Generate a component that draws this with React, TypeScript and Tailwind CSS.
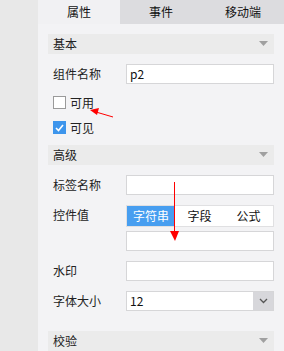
import React from 'react';

const font = { fontFamily: '"Noto Sans CJK SC", "Liberation Sans", sans-serif' };

const SectionHeader = ({ title }: { title: string }) => (
  <div className="flex h-[20px] items-center justify-between bg-[#ebebeb] pl-[5px] pr-[6px] text-[12px] text-[#222]">
    <span>{title}</span>
    <svg width="9" height="6" viewBox="0 0 9 6">
      <path d="M0 0 L9 0 L4.5 5 Z" fill="#a0a0a0" />
    </svg>
  </div>
);

const Row = ({ label, children }: { label: string; children?: React.ReactNode }) => (
  <div className="flex items-center">
    <div className="w-[78px] pl-[5px] text-[12px] text-[#222]">{label}</div>
    <div className="flex-1">{children}</div>
  </div>
);

const Input = ({ value }: { value?: string }) => (
  <div className="flex h-[20px] items-center border border-[#d6d6d8] bg-white px-[3px] text-[12px] text-[#111]">
    {value}
  </div>
);

const App = () => {
  return (
    <div className="relative flex h-[351px] w-[284px] overflow-hidden bg-[#e8e8e8]" style={font}>
      <div className="w-[38px] shrink-0" />
      <div className="flex flex-1 flex-col bg-[#f3f3f5]">
        {/* tabs */}
        <div className="flex h-[25px] text-[12px] text-[#111]">
          <div className="flex w-[82px] items-center justify-center bg-[#f1f1f3]">属性</div>
          <div className="flex w-[82px] items-center justify-center bg-[#dcdcdf]">事件</div>
          <div className="flex flex-1 items-center justify-center bg-[#dcdcdf]">移动端</div>
        </div>

        <div className="flex flex-col px-[10px]">
          <div className="mt-[10px]">
            <SectionHeader title="基本" />
          </div>
          <div className="mt-[10px]">
            <Row label="组件名称">
              <Input value="p2" />
            </Row>
          </div>
          <div className="mt-[12px] flex h-[13px] items-center pl-[5px] text-[12px] text-[#222]">
            <span className="h-[13px] w-[13px] border border-[#9a9a9a] bg-white" />
            <span className="ml-[4px]">可用</span>
          </div>
          <div className="mt-[12px] flex h-[13px] items-center pl-[5px] text-[12px] text-[#222]">
            <span className="flex h-[13px] w-[13px] items-center justify-center bg-[#3d95ec]">
              <svg width="9" height="8" viewBox="0 0 9 8">
                <path d="M1 4 L3.5 6.5 L8 1" stroke="white" strokeWidth="1.6" fill="none" />
              </svg>
            </span>
            <span className="ml-[4px]">可见</span>
          </div>
          <div className="mt-[11px]">
            <SectionHeader title="高级" />
          </div>
          <div className="mt-[10px]">
            <Row label="标签名称">
              <Input />
            </Row>
          </div>
          <div className="mt-[10px] flex">
            <div className="w-[78px] pl-[5px] pt-[1px] text-[12px] text-[#222]">控件值</div>
            <div className="flex flex-1 flex-col">
              <div className="flex h-[22px] border border-[#e0e0e2] bg-white text-[12px]">
                <div className="flex w-[48px] items-center justify-center bg-[#479ef0] text-white">字符串</div>
                <div className="flex flex-1 items-center justify-center text-[#111]">字段</div>
                <div className="flex flex-1 items-center justify-center text-[#111]">公式</div>
              </div>
              <div className="mt-[4px]">
                <Input />
              </div>
            </div>
          </div>
          <div className="mt-[10px]">
            <Row label="水印">
              <Input />
            </Row>
          </div>
          <div className="mt-[10px]">
            <Row label="字体大小">
              <div className="flex h-[20px] border border-[#d6d6d8] bg-white text-[12px] text-[#111]">
                <div className="flex flex-1 items-center px-[3px]">12</div>
                <div className="flex w-[20px] items-center justify-center bg-[#d7d7db]">
                  <svg width="9" height="6" viewBox="0 0 9 6">
                    <path d="M1 1 L4.5 4.5 L8 1" stroke="#555" strokeWidth="1.3" fill="none" />
                  </svg>
                </div>
              </div>
            </Row>
          </div>
          <div className="mt-[20px]">
            <SectionHeader title="校验" />
          </div>
        </div>
      </div>

      {/* red annotation arrows */}
      <svg className="pointer-events-none absolute left-0 top-0" width="284" height="351">
        <line x1="113" y1="117" x2="96" y2="112" stroke="#f00" strokeWidth="1" />
        <path d="M90 110 L99 108 L97 115 Z" fill="#f00" />
        <line x1="174.5" y1="182" x2="174.5" y2="234" stroke="#f00" strokeWidth="1" />
        <path d="M170 231 L179 231 L175 241 Z" fill="#f00" />
      </svg>
    </div>
  );
};

export default App;
